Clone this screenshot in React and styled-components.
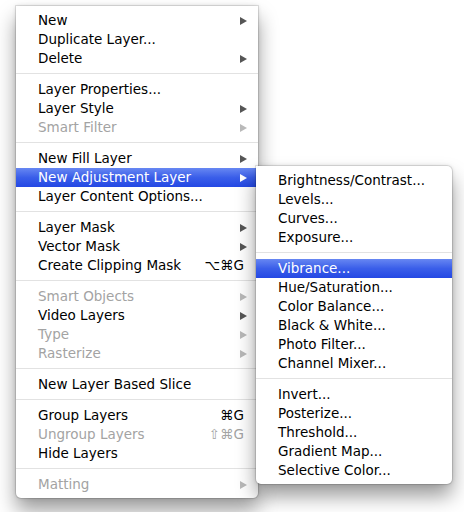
import React from "react";
import styled, { createGlobalStyle } from "styled-components";

const mainItems = [
  { label: "New", arrow: true },
  { label: "Duplicate Layer..." },
  { label: "Delete", arrow: true },
  { sep: true },
  { label: "Layer Properties..." },
  { label: "Layer Style", arrow: true },
  { label: "Smart Filter", arrow: true, disabled: true },
  { sep: true },
  { label: "New Fill Layer", arrow: true },
  { label: "New Adjustment Layer", arrow: true, active: true },
  { label: "Layer Content Options..." },
  { sep: true },
  { label: "Layer Mask", arrow: true },
  { label: "Vector Mask", arrow: true },
  { label: "Create Clipping Mask", shortcut: "⌥⌘G" },
  { sep: true },
  { label: "Smart Objects", arrow: true, disabled: true },
  { label: "Video Layers", arrow: true },
  { label: "Type", arrow: true, disabled: true },
  { label: "Rasterize", arrow: true, disabled: true },
  { sep: true },
  { label: "New Layer Based Slice" },
  { sep: true },
  { label: "Group Layers", shortcut: "⌘G" },
  { label: "Ungroup Layers", shortcut: "⇧⌘G", disabled: true },
  { label: "Hide Layers" },
  { sep: true },
  { label: "Matting", arrow: true, disabled: true },
];

const subItems = [
  { label: "Brightness/Contrast..." },
  { label: "Levels..." },
  { label: "Curves..." },
  { label: "Exposure..." },
  { sep: true },
  { label: "Vibrance...", active: true },
  { label: "Hue/Saturation..." },
  { label: "Color Balance..." },
  { label: "Black & White..." },
  { label: "Photo Filter..." },
  { label: "Channel Mixer..." },
  { sep: true },
  { label: "Invert..." },
  { label: "Posterize..." },
  { label: "Threshold..." },
  { label: "Gradient Map..." },
  { label: "Selective Color..." },
];

const MenuList = ({ items }) =>
  items.map((item, i) =>
    item.sep ? (
      <Separator key={i} />
    ) : (
      <Row key={i} $active={item.active} $disabled={item.disabled}>
        <Label>{item.label}</Label>
        {item.shortcut && <Shortcut>{item.shortcut}</Shortcut>}
        {item.arrow && <Arrow $active={item.active} $disabled={item.disabled} />}
      </Row>
    )
  );

const App = () => {
  return (
    <Page>
      <GlobalStyle />
      <Stage>
        <MainMenu>
          <MenuList items={mainItems} />
        </MainMenu>
        <SubMenu>
          <MenuList items={subItems} />
        </SubMenu>
      </Stage>
    </Page>
  );
};

export default App;

const GlobalStyle = createGlobalStyle`
  body {
    margin: 0;
    background: #ffffff;
    font-family: "DejaVu Sans", "Liberation Sans", sans-serif;
  }
`;

const Page = styled.div`
  width: 464px;
  height: 512px;
  overflow: hidden;
  background: #ffffff;
`;

const Stage = styled.div`
  position: relative;
  padding: 6px 0 0 16px;
`;

const MainMenu = styled.div`
  width: 242px;
  padding: 5px 0 4px;
  background: #ffffff;
  border-radius: 0 0 5px 5px;
  box-shadow: 0 0 0 1px rgba(0, 0, 0, 0.1), 0 0 4px rgba(0, 0, 0, 0.15),
    0 12px 20px rgba(0, 0, 0, 0.4);
`;

const SubMenu = styled.div`
  position: absolute;
  left: 256px;
  top: 166px;
  width: 196px;
  padding: 5px 0 4px;
  background: #ffffff;
  border-radius: 0 5px 5px 5px;
  box-shadow: 0 0 0 1px rgba(0, 0, 0, 0.1), 0 0 4px rgba(0, 0, 0, 0.15),
    0 12px 20px rgba(0, 0, 0, 0.4);
`;

const Row = styled.div`
  box-sizing: border-box;
  display: flex;
  align-items: center;
  height: 19px;
  padding: 0 11px 2px 22px;
  font-size: 13.5px;
  color: ${(p) => (p.$active ? "#ffffff" : p.$disabled ? "#a3a3a3" : "#000000")};
  background: ${(p) =>
    p.$active ? "linear-gradient(to bottom, #6787f2 0%, #3a5ee9 50%, #2448e4 100%)" : "transparent"};
`;

const Label = styled.span`
  flex: 1;
  white-space: nowrap;
`;

const Shortcut = styled.span`
  margin-right: 3px;
  white-space: nowrap;
`;

const Arrow = styled.span`
  width: 0;
  height: 0;
  margin-top: 2px;
  border-top: 4.5px solid transparent;
  border-bottom: 4.5px solid transparent;
  border-left: 7px solid
    ${(p) => (p.$active ? "#ffffff" : p.$disabled ? "#b9b9b9" : "#565656")};
`;

const Separator = styled.div`
  height: 1px;
  margin: 5px 0 6px;
  background: #e2e2e2;
`;
